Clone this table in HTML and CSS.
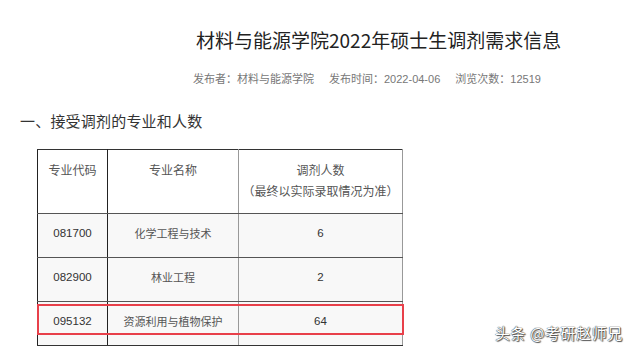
FILE: index.html
```html
<!DOCTYPE html>
<html lang="zh-CN">
<head>
<meta charset="utf-8">
<title>材料与能源学院2022年硕士生调剂需求信息</title>
<link rel="stylesheet" href="styles.css">
</head>
<body>
<div class="page">
  <header class="head">
    <h1 class="title">材料与能源学院2022年硕士生调剂需求信息</h1>
    <div class="meta">
      <span>发布者：材料与能源学院</span>
      <span>发布时间：2022-04-06</span>
      <span>浏览次数：12519</span>
    </div>
  </header>
  <h2 class="section">一、接受调剂的专业和人数</h2>
  <div class="table-wrap">
    <table class="plan">
      <thead>
        <tr>
          <th class="c1">专业代码</th>
          <th class="c2">专业名称</th>
          <th class="c3">调剂人数<br><span class="note">（最终以实际录取情况为准）</span></th>
        </tr>
      </thead>
      <tbody>
        <tr><td class="c1 num">081700</td><td class="c2">化学工程与技术</td><td class="c3 num">6</td></tr>
        <tr><td class="c1 num">082900</td><td class="c2">林业工程</td><td class="c3 num">2</td></tr>
        <tr><td class="c1 num">095132</td><td class="c2">资源利用与植物保护</td><td class="c3 num">64</td></tr>
      </tbody>
    </table>
    <div class="mark"></div>
  </div>
  <div class="watermark">头条 @考研赵师兄</div>
</div>
</body>
</html>
```

FILE: styles.css
```css
html, body {
  margin: 0;
  padding: 0;
  background: #ffffff;
}
body {
  font-family: "Noto Sans CJK SC", "Noto Sans", sans-serif;
  color: #333;
}
.page {
  position: relative;
  width: 640px;
  height: 354px;
  overflow: hidden;
}
.head {
  padding: 26px 0 0 196px;
}
.title {
  margin: 0;
  font-size: 19px;
  line-height: 28px;
  font-weight: normal;
  color: #222;
  white-space: nowrap;
}
.meta {
  margin-top: 17px;
  display: flex;
  gap: 15px;
  margin-left: -3px;
  font-family: "Liberation Sans", "Noto Sans CJK SC", sans-serif;
  font-size: 11px;
  line-height: 16px;
  color: #777;
  white-space: nowrap;
}
.section {
  margin: 23px 0 0 20px;
  font-size: 15px;
  line-height: 22px;
  font-weight: normal;
  color: #333;
  letter-spacing: 0.2px;
}
.table-wrap {
  position: relative;
  margin: 17px 0 0 37px;
  width: 367px;
}
.plan {
  border-collapse: collapse;
  table-layout: fixed;
  width: 366px;
  font-size: 11px;
}
.plan th, .plan td {
  padding: 0;
  text-align: center;
  border-top: 1px solid #555;
  border-bottom: 1px solid #555;
}
.plan th {
  height: 54px;
  padding-top: 9px;
  vertical-align: top;
  font-size: 12px;
  line-height: 21px;
  font-weight: normal;
  color: #555;
  background: #fff;
  border-top: 1px solid #333;
}
.plan td {
  height: 38px;
  padding-bottom: 5px;
  vertical-align: middle;
  color: #555;
  background: #f8f8f8;
}
.plan td.num {
  color: #333;
  font-size: 11.5px;
  font-family: "Liberation Sans", "Noto Sans", sans-serif;
}
.plan .c1 {
  width: 69px;
  border-left: 1px solid #222;
  border-right: 1px solid #222;
}
.plan .c2 {
  width: 130px;
  border-right: 1px solid #999;
}
.plan .c3 {
  border-right: 1px solid #999;
}
.plan tbody tr:last-child td {
  border-bottom: 1px solid #333;
}
.note {
  font-size: 12px;
  color: #555;
}
.mark {
  position: absolute;
  left: 0;
  top: 155px;
  width: 367px;
  height: 31px;
  box-sizing: border-box;
  border: 2px solid #e8404a;
}
.watermark {
  position: absolute;
  left: 495px;
  top: 323px;
  font-size: 15px;
  line-height: 20px;
  letter-spacing: 0.6px;
  color: #fff;
  white-space: nowrap;
  text-shadow: 0 0 1px #333, 0 0 1px #333, 1px 1px 1px #555;
}
```
